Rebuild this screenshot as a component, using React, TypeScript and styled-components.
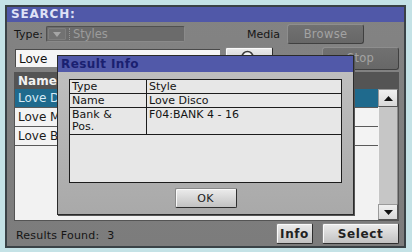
import React from "react";
import styled, { createGlobalStyle } from "styled-components";

const Global = createGlobalStyle`
  html, body { margin: 0; padding: 0; }
  body {
    width: 412px; height: 252px; overflow: hidden;
    background: #c4e2e6;
    font-family: "DejaVu Sans", Verdana, sans-serif;
  }
`;

const Page = styled.div`
  width: 412px;
  height: 252px;
  box-sizing: border-box;
  padding: 5px 6px 4px 5px;
  background: #c4e2e6;
`;

const Window = styled.div`
  position: relative;
  box-sizing: border-box;
  width: 401px;
  height: 243px;
  border: 2px solid #3a4246;
  background: linear-gradient(#838383, #7c7c7c);
  display: flex;
  flex-direction: column;
  overflow: hidden;
`;

const TitleBar = styled.div`
  height: 15px;
  line-height: 15px;
  padding-left: 4px;
  background: #5058a8;
  color: #dfe2f6;
  font-weight: bold;
  font-size: 12px;
  letter-spacing: 0.8px;
`;

const Body = styled.div`
  flex: 1;
  display: flex;
  flex-direction: column;
  gap: 2px;
  padding: 2px 5px 2px 8px;
`;

const Row = styled.div<{ $h: number }>`
  display: flex;
  align-items: center;
  height: ${(p) => p.$h}px;
`;

const Label = styled.span<{ $ml?: number }>`
  font-size: 11px;
  color: #161616;
  margin-left: ${(p) => p.$ml ?? 0}px;
`;

const Dropdown = styled.div`
  box-sizing: border-box;
  width: 139px;
  height: 16px;
  margin-left: 3px;
  display: flex;
  align-items: center;
  gap: 3px;
  padding-left: 1px;
  background: #6b6b6b;
  border: 1px solid #505050;
  border-right-color: #8a8a8a;
  border-bottom-color: #8a8a8a;
  border-radius: 2px;
  color: #9c9c9c;
  font-size: 11.5px;
`;

const ArrowBox = styled.div`
  box-sizing: border-box;
  width: 18px;
  height: 12px;
  display: flex;
  align-items: center;
  justify-content: center;
  background: #727272;
  border: 1px solid #7e7e7e;
  border-radius: 1px;
`;

const DottedSep = styled.div`
  width: 0;
  height: 12px;
  border-left: 1px dotted #959595;
`;

const DarkButton = styled.div<{ $w: number; $h: number; $ml?: number; $mr?: number }>`
  box-sizing: border-box;
  width: ${(p) => p.$w}px;
  height: ${(p) => p.$h}px;
  margin-left: ${(p) => p.$ml ?? 0}px;
  margin-right: ${(p) => p.$mr ?? 0}px;
  display: flex;
  align-items: center;
  justify-content: center;
  background: linear-gradient(#717171, #676767);
  border: 1px solid #8e8e8e;
  border-right-color: #404040;
  border-bottom-color: #404040;
  border-radius: 3px;
  color: #a3a3a3;
  font-size: 11.5px;
  letter-spacing: 0.3px;
`;

const LightButton = styled.div<{ $w: number; $h: number; $ml?: number; $mr?: number; $bold?: boolean }>`
  box-sizing: border-box;
  width: ${(p) => p.$w}px;
  height: ${(p) => p.$h}px;
  margin-left: ${(p) => p.$ml ?? 0}px;
  margin-right: ${(p) => p.$mr ?? 0}px;
  display: flex;
  align-items: center;
  justify-content: center;
  background: linear-gradient(#ececec, #c2c2c2);
  border: 1px solid #8a8a8a;
  border-right-color: #2e2e2e;
  border-bottom-color: #2e2e2e;
  border-radius: 2px;
  box-shadow: inset 1px 1px 0 #fafafa;
  color: #222;
  font-size: ${(p) => (p.$bold ? 12 : 11)}px;
  font-weight: ${(p) => (p.$bold ? "bold" : "normal")};
  letter-spacing: ${(p) => (p.$bold ? 0.6 : 0.3)}px;
`;

const Spacer = styled.div`
  flex: 1;
`;

const TextInput = styled.div`
  box-sizing: border-box;
  width: 205px;
  height: 18px;
  padding-left: 3px;
  display: flex;
  align-items: center;
  background: #f6f6f6;
  border-top: 1px solid #4a4a4a;
  border-left: 1px solid #4a4a4a;
  font-size: 12px;
  color: #111;
`;

const List = styled.div`
  box-sizing: border-box;
  margin-left: -1px;
  height: 149px;
  display: flex;
  flex-direction: column;
  border: 1px solid #545454;
  background: #f2f2f2;
`;

const ListHeader = styled.div`
  height: 16px;
  line-height: 16px;
  padding-left: 3px;
  background: #545454;
  color: #f2f2f2;
  font-weight: bold;
  font-size: 12px;
`;

const ListBody = styled.div`
  flex: 1;
  display: flex;
`;

const Rows = styled.div`
  flex: 1;
  display: flex;
  flex-direction: column;
  background: #f2f2f2;
`;

const ListRow = styled.div<{ $sel?: boolean }>`
  box-sizing: border-box;
  height: 19px;
  line-height: 18px;
  padding-left: 3px;
  border-bottom: 1px solid #5a5a5a;
  background: ${(p) => (p.$sel ? "#1f6a8d" : "#f3f3f3")};
  color: ${(p) => (p.$sel ? "#d6ebf6" : "#1a1a1a")};
  font-size: 12px;
  white-space: nowrap;
`;

const Scrollbar = styled.div`
  width: 20px;
  display: flex;
  flex-direction: column;
  background: #c4c4c4;
`;

const ScrollBtn = styled.div<{ $h: number }>`
  box-sizing: border-box;
  height: ${(p) => p.$h}px;
  display: flex;
  align-items: center;
  justify-content: center;
  background: linear-gradient(#f0f0f0, #d8d8d8);
  border: 1px solid #9a9a9a;
  border-right-color: #555;
  border-bottom-color: #555;
`;

const Track = styled.div`
  flex: 1;
  background: #c6c6c6;
  border-left: 1px solid #f4f4f4;
  border-right: 1px solid #8c8c8c;
`;

const Footer = styled.div`
  height: 21px;
  display: flex;
  align-items: center;
`;

const Status = styled.span`
  margin-left: 1px;
  margin-top: 3px;
  font-size: 11px;
  color: #151515;
  letter-spacing: 0.2px;
`;

const Count = styled.span`
  margin-left: 8px;
`;

const Dialog = styled.div`
  position: absolute;
  left: 50px;
  top: 48px;
  width: 297px;
  height: 160px;
  box-sizing: border-box;
  border: 1px solid #2a2a2a;
  display: flex;
  flex-direction: column;
  box-shadow: 1px 1px 0 #555;
`;

const DialogTitle = styled.div`
  height: 16px;
  line-height: 16px;
  padding-left: 3px;
  background: #5159a9;
  color: #1a2070;
  font-weight: bold;
  font-size: 12px;
  letter-spacing: 0.4px;
`;

const DialogBody = styled.div`
  flex: 1;
  display: flex;
  flex-direction: column;
  align-items: center;
  gap: 5px;
  padding: 7px 11px 6px 11px;
  background: linear-gradient(#bebebe, #a9a9a9);
`;

const InfoTable = styled.div`
  box-sizing: border-box;
  width: 273px;
  height: 104px;
  display: grid;
  grid-template-columns: 77px 1fr;
  grid-template-rows: 14px 14px 27px;
  align-content: start;
  border: 1px solid #1c1c1c;
  background: #e7e7e7;
`;

const Cell = styled.div<{ $first?: boolean; $multi?: boolean }>`
  box-sizing: border-box;
  padding: ${(p) => (p.$multi ? "1px 0 0 2px" : "0 0 0 2px")};
  border-bottom: 1px solid #1c1c1c;
  border-right: ${(p) => (p.$first ? "1px solid #1c1c1c" : "none")};
  font-size: 11px;
  line-height: ${(p) => (p.$multi ? 12 : 13)}px;
  color: #141414;
  white-space: nowrap;
`;

const rows = [
  { name: "Love Disco", sel: true },
  { name: "Love Me Tender" },
  { name: "Love Ballad" },
];

const info = [
  ["Type", "Style"],
  ["Name", "Love Disco"],
];

export default function App() {
  return (
    <Page>
      <Global />
      <Window>
        <TitleBar>SEARCH:</TitleBar>
        <Body>
          <Row $h={20}>
            <Label $ml={-1}>Type:</Label>
            <Dropdown>
              <ArrowBox>
                <svg width="8" height="5" viewBox="0 0 8 5">
                  <path d="M0 0 H8 L4 5 Z" fill="#a6a6a6" />
                </svg>
              </ArrowBox>
              <DottedSep />
              <span>Styles</span>
            </Dropdown>
            <Spacer />
            <Label>Media</Label>
            <DarkButton $w={77} $h={20} $ml={7} $mr={35}>
              Browse
            </DarkButton>
          </Row>
          <Row $h={24}>
            <TextInput>Love</TextInput>
            <LightButton $w={48} $h={22} $ml={5}>
              <svg width="18" height="18" viewBox="0 0 18 18">
                <circle cx="7.5" cy="8" r="5.5" fill="#f4f4f4" stroke="#3a3a3a" strokeWidth="1.5" />
                <path d="M11.5 12 L16 16.5" stroke="#3a3a3a" strokeWidth="2.5" strokeLinecap="round" />
              </svg>
            </LightButton>
            <Spacer />
            <DarkButton $w={77} $h={23}>
              Stop
            </DarkButton>
          </Row>
          <List>
            <ListHeader>Name</ListHeader>
            <ListBody>
              <Rows>
                {rows.map((r) => (
                  <ListRow key={r.name} $sel={r.sel}>
                    {r.name}
                  </ListRow>
                ))}
              </Rows>
              <Scrollbar>
                <ScrollBtn $h={18}>
                  <svg width="9" height="5" viewBox="0 0 9 5">
                    <path d="M0 5 L4.5 0 L9 5 Z" fill="#111" />
                  </svg>
                </ScrollBtn>
                <Track />
                <ScrollBtn $h={16}>
                  <svg width="9" height="5" viewBox="0 0 9 5">
                    <path d="M0 0 H9 L4.5 5 Z" fill="#111" />
                  </svg>
                </ScrollBtn>
              </Scrollbar>
            </ListBody>
          </List>
          <Footer>
            <Status>
              Results Found:<Count>3</Count>
            </Status>
            <Spacer />
            <LightButton $w={37} $h={21} $mr={9} $bold>
              Info
            </LightButton>
            <LightButton $w={77} $h={21} $bold>
              Select
            </LightButton>
          </Footer>
        </Body>
        <Dialog>
          <DialogTitle>Result Info</DialogTitle>
          <DialogBody>
            <InfoTable>
              {info.map(([k, v]) => (
                <React.Fragment key={k}>
                  <Cell $first>{k}</Cell>
                  <Cell>{v}</Cell>
                </React.Fragment>
              ))}
              <Cell $first $multi>
                Bank &amp;
                <br />
                Pos.
              </Cell>
              <Cell $multi>F04:BANK 4 - 16</Cell>
            </InfoTable>
            <LightButton $w={62} $h={20}>
              OK
            </LightButton>
          </DialogBody>
        </Dialog>
      </Window>
    </Page>
  );
}
